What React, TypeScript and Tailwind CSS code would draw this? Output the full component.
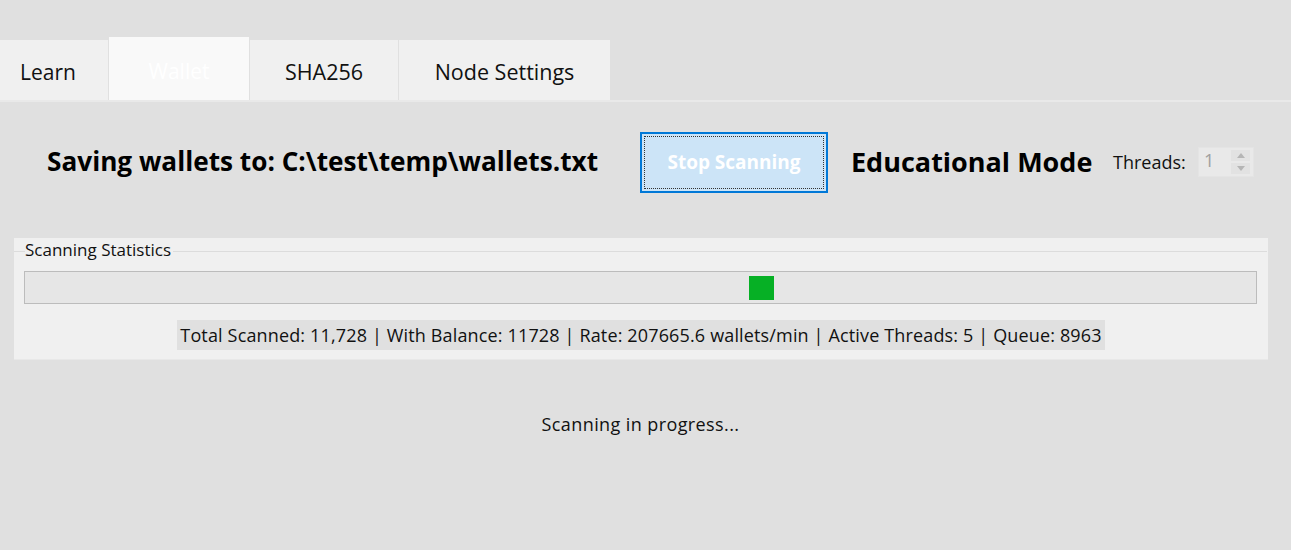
import React from "react";

const font = { fontFamily: '"Open Sans", "Noto Sans", "Liberation Sans", sans-serif' };

export default function App() {
  return (
    <div
      className="w-[1291px] h-[550px] bg-[#e0e0e0] text-[#1a1a1a] overflow-hidden"
      style={font}
    >
      {/* Tab bar */}
      <div className="flex items-end h-[100px] gap-[1px]">
        <div className="w-[108px] h-[60px] bg-[#f0f0f0] flex items-center justify-center pt-[5px] pr-[12px] text-[21px] text-[#111]">
          Learn
        </div>
        <div className="w-[140px] h-[63px] bg-[#f9f9f9] flex items-center justify-center pt-[7px] text-[21px] text-white">
          Wallet
        </div>
        <div className="w-[148px] h-[60px] bg-[#f0f0f0] flex items-center justify-center pt-[5px] text-[21.5px] text-[#111]">
          SHA256
        </div>
        <div className="w-[211px] h-[60px] bg-[#f0f0f0] flex items-center justify-center pt-[5px] text-[21.5px] text-[#111]">
          Node Settings
        </div>
      </div>
      <div className="h-[2px] bg-[#e9e9e9]" />

      {/* Controls row */}
      <div className="flex items-center mt-[30px] h-[60px] pl-[47px]">
        <div className="w-[593px] text-[26.2px] font-bold text-black whitespace-nowrap">
          Saving wallets to: C:\test\temp\wallets.txt
        </div>
        <div className="w-[188px] h-[61px] border-2 border-[#0078d7] bg-[#cce4f7] p-[2px]">
          <div className="w-full h-full border border-dotted border-[#333] flex items-center justify-center text-[19px] font-bold text-white">
            Stop Scanning
          </div>
        </div>
        <div className="ml-[23px] w-[262px] text-[27px] font-bold text-black whitespace-nowrap">
          Educational Mode
        </div>
        <div className="w-[85px] text-[18px] text-[#111] whitespace-nowrap">Threads:</div>
        <div className="w-[56px] h-[30px] bg-[#e9e9e9] border border-[#e4e4e4] flex items-stretch">
          <div className="flex-1 pl-[5px] text-[18px] text-[#a0a0a0] leading-[24px]">1</div>
          <div className="w-[22px] flex flex-col justify-center gap-[2px] pr-[3px]">
            <div className="h-[11px] bg-[#e2e2e2] flex items-center justify-center">
              <svg width="8" height="5" viewBox="0 0 8 5"><path d="M0 5 L4 0 L8 5 Z" fill="#b5b5b5" /></svg>
            </div>
            <div className="h-[11px] bg-[#e2e2e2] flex items-center justify-center">
              <svg width="8" height="5" viewBox="0 0 8 5"><path d="M0 0 L4 5 L8 0 Z" fill="#b5b5b5" /></svg>
            </div>
          </div>
        </div>
      </div>

      {/* Group box */}
      <div className="mt-[46px] ml-[14px] w-[1254px] h-[121px] bg-[#f0f0f0] relative">
        <div className="absolute left-0 right-[1px] top-[13px] h-[1px] bg-[#dcdcdc]" />
        <div className="relative pl-[11px] pt-[1px] h-[20px] text-[17px] leading-[22px] text-[#111] whitespace-nowrap">
          <span className="bg-[#f0f0f0] pr-[2px]">Scanning Statistics</span>
        </div>
        <div className="mt-[13px] ml-[10px] w-[1233px] h-[33px] border border-[#bcbcbc] bg-[#e6e6e6] relative">
          <div className="absolute left-[724px] top-[4px] w-[25px] h-[24px] bg-[#06b025]" />
        </div>
        <div className="flex justify-center mt-[16px]">
          <div className="bg-[#e0e0e0] px-[3px] h-[30px] text-[18px] leading-[30px] text-[#111] whitespace-nowrap tracking-[0.15px]">
            Total Scanned: 11,728 | With Balance: 11728 | Rate: 207665.6 wallets/min | Active Threads: 5 | Queue: 8963
          </div>
        </div>
      </div>
      <div className="h-[1px] ml-[14px] w-[1254px] bg-[#e8e8e8]" />

      {/* Status */}
      <div className="flex justify-center mt-[51px] pr-[10px] text-[18px] tracking-[0.4px] text-[#111]">
        Scanning in progress...
      </div>
    </div>
  );
}
